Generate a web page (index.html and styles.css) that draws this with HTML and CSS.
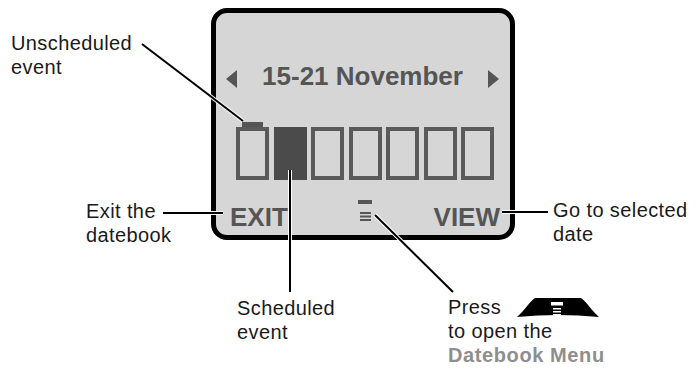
FILE: index.html
```html
<!DOCTYPE html>
<html>
<head>
  <title>Datebook Week View</title>
  <link rel="stylesheet" href="styles.css">
</head>
<body>
  <div class="figure">
    <div class="screen">
      <div class="week-header">
        <svg class="arrow" width="11" height="18" viewBox="0 0 11 18"><polygon points="11,0 0,9 11,18"/></svg>
        <span class="week-title">15-21 November</span>
        <svg class="arrow" width="11" height="18" viewBox="0 0 11 18"><polygon points="0,0 11,9 0,18"/></svg>
      </div>

      <div class="days">
        <div class="day unscheduled"><div class="mark"></div><div class="cell"></div></div>
        <div class="day scheduled"><div class="mark"></div><div class="cell"></div></div>
        <div class="day"><div class="mark"></div><div class="cell"></div></div>
        <div class="day"><div class="mark"></div><div class="cell"></div></div>
        <div class="day"><div class="mark"></div><div class="cell"></div></div>
        <div class="day"><div class="mark"></div><div class="cell"></div></div>
        <div class="day"><div class="mark"></div><div class="cell"></div></div>
      </div>

      <div class="softkeys">
        <span class="key key-left">EXIT</span>
        <svg class="menu-icon" width="14" height="22" viewBox="0 0 14 22">
          <rect x="0" y="0" width="14" height="4"/>
          <rect x="2" y="12" width="11" height="2"/>
          <rect x="2" y="15.5" width="11" height="2"/>
          <rect x="2" y="19" width="11" height="2"/>
        </svg>
        <span class="key key-right">VIEW</span>
      </div>
    </div>

    <!-- callouts -->
    <div class="note note-unscheduled">Unscheduled<br>event</div>
    <div class="note note-exit">Exit the<br>datebook</div>
    <div class="note note-view">Go to selected<br>date</div>
    <div class="note note-scheduled">Scheduled<br>event</div>
    <div class="note note-press">
      Press
      <svg class="softkey" width="82" height="19" viewBox="0 0 82 19">
        <path d="M0,19 C7,13 13,3 18,0 L64,0 C69,3 75,13 82,19 Q41,15 0,19 Z" fill="#000"/>
        <rect x="34" y="4" width="12" height="3.5" fill="#fff"/>
        <rect x="36" y="10" width="8" height="1.5" fill="#fff"/>
        <rect x="36" y="13" width="8" height="1.5" fill="#fff"/>
        <rect x="36" y="16" width="8" height="1.5" fill="#fff"/>
      </svg><br>
      to open the<br>
      <span class="menu-name">Datebook Menu</span>
    </div>

    <svg class="leaders" width="696" height="369" viewBox="0 0 696 369">
      <g class="halo">
        <line x1="142" y1="44" x2="243" y2="121"/>
        <line x1="163" y1="213" x2="223" y2="213"/>
        <line x1="502" y1="212" x2="548" y2="212"/>
        <line x1="290" y1="170" x2="290" y2="292"/>
        <line x1="375" y1="215" x2="453" y2="292"/>
      </g>
      <g class="ink">
        <line x1="142" y1="44" x2="243" y2="121"/>
        <line x1="163" y1="213" x2="223" y2="213"/>
        <line x1="502" y1="212" x2="548" y2="212"/>
        <line x1="290" y1="170" x2="290" y2="292"/>
        <line x1="375" y1="215" x2="453" y2="292"/>
      </g>
    </svg>
  </div>
</body>
</html>
```

FILE: styles.css
```css
body {
  margin: 0;
  background: #fff;
  font-family: "Liberation Sans", Arial, sans-serif;
}

.figure {
  position: relative;
  width: 696px;
  height: 369px;
  padding: 8px 0 0 211px;
  box-sizing: border-box;
  overflow: hidden;
}

/* phone screen */
.screen {
  width: 304px;
  height: 232px;
  box-sizing: border-box;
  border: 5px solid #000;
  border-radius: 16px;
  background: #d6d6d6;
  color: #555;
  display: flex;
  flex-direction: column;
}

.week-header {
  display: flex;
  justify-content: space-between;
  align-items: center;
  height: 30px;
  margin-top: 48px;
  padding: 0 11px 0 10px;
}

.arrow {
  fill: #555;
  margin-top: 6px;
}

.week-title {
  font-size: 26px;
  font-weight: bold;
  line-height: 30px;
}

.days {
  display: flex;
  gap: 4.5px;
  margin-top: 31px;
  padding-left: 20px;
}

.day {
  width: 33px;
  display: flex;
  flex-direction: column;
}

.mark {
  width: 21px;
  height: 5px;
  margin: 0 auto;
}

.cell {
  height: 53px;
  box-sizing: border-box;
  border: 4px solid #5a5a5a;
}

.unscheduled .mark {
  background: #555;
}

.scheduled .cell {
  background: #4b4b4b;
  border-color: #4b4b4b;
}

.softkeys {
  display: grid;
  grid-template-columns: 1fr auto 1fr;
  height: 30px;
  margin-top: 22px;
  padding: 0 10px 0 14px;
}

.key {
  font-size: 26px;
  font-weight: bold;
  line-height: 30px;
}

.key-left {
  justify-self: start;
}

.key-right {
  justify-self: end;
}

.menu-icon {
  fill: #555;
  align-self: start;
  margin-top: -2px;
}

/* callouts */
.note {
  position: absolute;
  font-size: 20px;
  line-height: 24px;
  letter-spacing: 0.4px;
  color: #1a1a1a;
  white-space: nowrap;
}

.note-unscheduled {
  left: 11px;
  top: 31px;
}

.note-exit {
  left: 86px;
  top: 199px;
}

.note-view {
  left: 553px;
  top: 198px;
}

.note-scheduled {
  left: 237px;
  top: 296px;
}

.note-press {
  left: 448px;
  top: 295px;
}

.softkey {
  vertical-align: -3px;
  margin-left: 10px;
}

.menu-name {
  font-weight: bold;
  color: #8e8e8e;
  letter-spacing: 0.6px;
}

.leaders {
  position: absolute;
  left: 0;
  top: 0;
}

.leaders line {
  stroke-linecap: butt;
}

.halo {
  stroke: #fff;
  stroke-width: 4;
}

.ink {
  stroke: #000;
  stroke-width: 2;
}
```
